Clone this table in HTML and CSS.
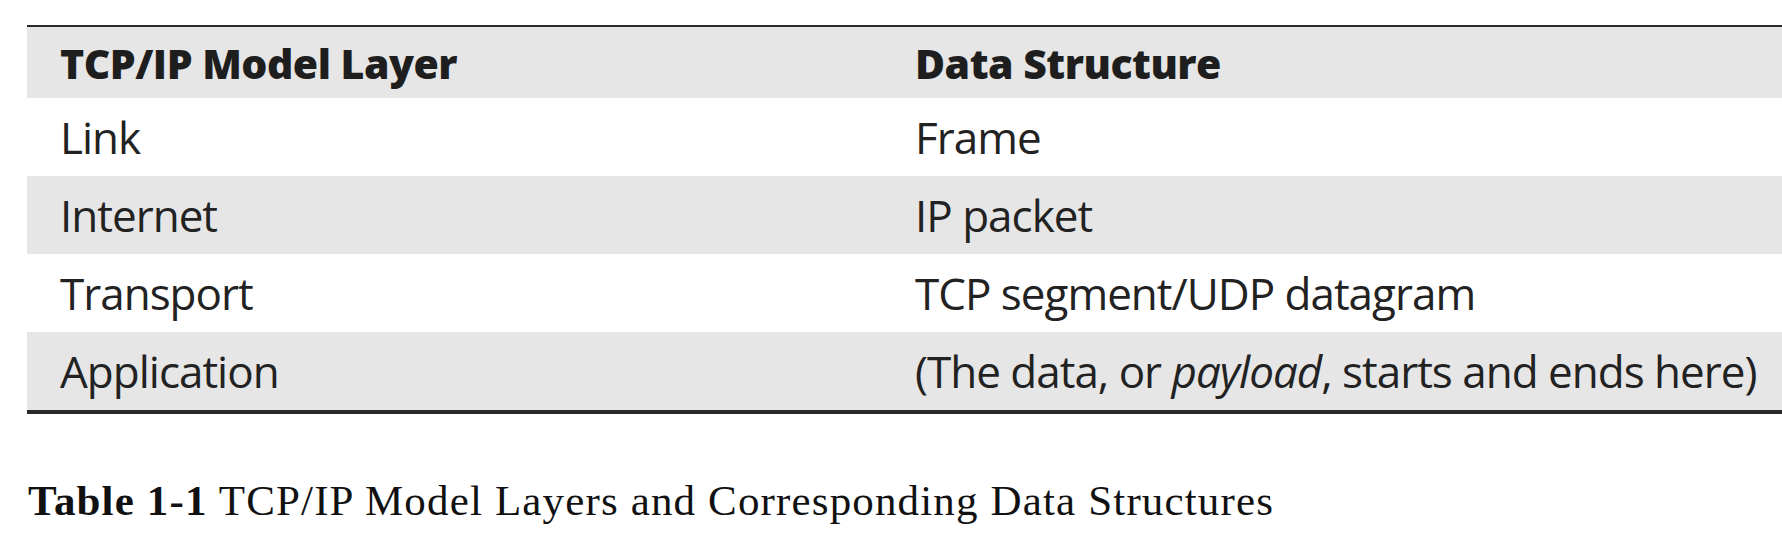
FILE: index.html
```html
<!DOCTYPE html>
<html lang="en">
<head>
<meta charset="utf-8">
<title>TCP/IP Model Layers</title>
<link rel="stylesheet" href="styles.css">
</head>
<body>
<div class="page">
  <table class="layers">
    <thead>
      <tr class="head-row">
        <th class="col-a">TCP/IP Model Layer</th>
        <th class="col-b">Data Structure</th>
      </tr>
    </thead>
    <tbody>
      <tr class="row-white"><td class="col-a">Link</td><td class="col-b">Frame</td></tr>
      <tr class="row-gray"><td class="col-a">Internet</td><td class="col-b">IP packet</td></tr>
      <tr class="row-white"><td class="col-a">Transport</td><td class="col-b">TCP segment/UDP datagram</td></tr>
      <tr class="row-gray"><td class="col-a">Application</td><td class="col-b">(The data, or <em>payload</em>, starts and ends here)</td></tr>
    </tbody>
  </table>
  <p class="caption"><strong>Table 1-1</strong> TCP/IP Model Layers and Corresponding Data Structures</p>
</div>
</body>
</html>
```

FILE: styles.css
```css
html, body {
  margin: 0;
  padding: 0;
  background: #ffffff;
}

.page {
  padding: 25px 0 0 27px;
}

.layers {
  width: calc(100% + 2px);
  border-collapse: collapse;
  border-top: 2px solid #2a2a2a;
  border-bottom: 4px solid #2a2a2a;
  font-family: "Open Sans", "Noto Sans", sans-serif;
  color: #222222;
}

.layers th,
.layers td {
  text-align: left;
  padding: 0 0 0 33px;
  vertical-align: middle;
  white-space: nowrap;
}

.col-a {
  width: 822px;
}

.head-row th {
  height: 71px;
  font-size: 41px;
  font-weight: 800;
  letter-spacing: -0.5px;
  background: #e6e6e6;
  color: #1e1e1e;
}

.layers td {
  height: 78px;
  font-size: 44px;
  font-weight: 400;
  letter-spacing: -1px;
}

.layers td em {
  font-style: italic;
}

.row-white td {
  background: #ffffff;
}

.row-gray td {
  background: #e6e6e6;
}

.caption {
  margin: 62px 0 0 1px;
  font-family: "Liberation Serif", "Times New Roman", serif;
  font-size: 43px;
  color: #111111;
  letter-spacing: 1.15px;
}

.caption strong {
  font-weight: 700;
}
```
